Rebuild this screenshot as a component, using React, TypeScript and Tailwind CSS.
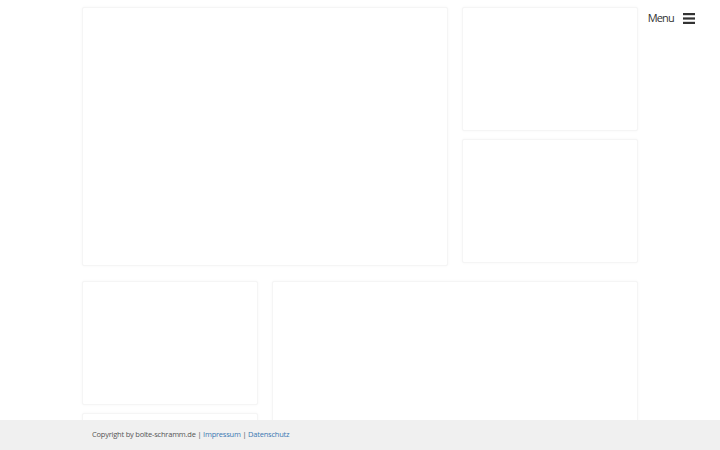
import React from 'react';

const card = 'rounded-[2px] border border-[#f5f5f5] bg-white shadow-[0_0_3px_rgba(0,0,0,0.04)]';

export default function App() {
  return (
    <div className="relative h-[450px] w-[720px] overflow-hidden bg-white" style={{ fontFamily: '"Open Sans", sans-serif' }}>
      {/* kacheln */}
      <div className="ml-[82px] flex w-[556px] flex-col gap-[15px] pt-[7px]">
        <div className="grid grid-cols-[366px_176px] gap-x-[14px]">
          <div className={`${card} h-[259px]`} />
          <div className="flex flex-col gap-[8px]">
            <div className={`${card} h-[124px]`} />
            <div className={`${card} h-[124px]`} />
          </div>
        </div>
        <div className="grid grid-cols-[176px_366px] gap-x-[14px]">
          <div className="flex flex-col gap-[8px]">
            <div className={`${card} h-[124px]`} />
            <div className={`${card} h-[124px]`} />
          </div>
          <div className={`${card} h-[259px]`} />
        </div>
      </div>

      {/* menu */}
      <div className="absolute right-[25px] top-[11px] flex items-center gap-[9px]">
        <span className="text-[11px] leading-[14px] tracking-[-0.8px] text-[#333]">Menu</span>
        <svg width="12" height="11" viewBox="0 0 12 11">
          <rect x="0" y="0" width="12" height="2.2" fill="#333" />
          <rect x="0" y="4.4" width="12" height="2.2" fill="#333" />
          <rect x="0" y="8.8" width="12" height="2.2" fill="#333" />
        </svg>
      </div>

      {/* footer */}
      <div className="absolute bottom-0 left-0 right-0 flex h-[30px] items-center bg-[#f0f0f0] pl-[92px] text-[7.5px] tracking-[-0.22px] text-[#555]">
        <span className="whitespace-pre">Copyright by bolte-schramm.de | </span>
        <a className="text-[#3b79b3]">Impressum</a>
        <span className="whitespace-pre"> | </span>
        <a className="text-[#3b79b3]">Datenschutz</a>
      </div>
    </div>
  );
}
